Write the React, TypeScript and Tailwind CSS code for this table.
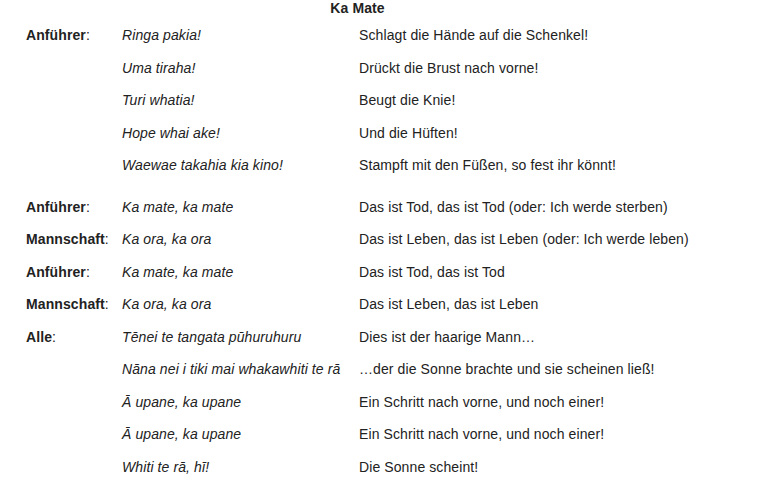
import React from "react";

type Row = { who?: string; mi: string; de: string };

const block1: Row[] = [
  { who: "Anführer", mi: "Ringa pakia!", de: "Schlagt die Hände auf die Schenkel!" },
  { mi: "Uma tiraha!", de: "Drückt die Brust nach vorne!" },
  { mi: "Turi whatia!", de: "Beugt die Knie!" },
  { mi: "Hope whai ake!", de: "Und die Hüften!" },
  { mi: "Waewae takahia kia kino!", de: "Stampft mit den Füßen, so fest ihr könnt!" },
];

const block2: Row[] = [
  { who: "Anführer", mi: "Ka mate, ka mate", de: "Das ist Tod, das ist Tod (oder: Ich werde sterben)" },
  { who: "Mannschaft", mi: "Ka ora, ka ora", de: "Das ist Leben, das ist Leben (oder: Ich werde leben)" },
  { who: "Anführer", mi: "Ka mate, ka mate", de: "Das ist Tod, das ist Tod" },
  { who: "Mannschaft", mi: "Ka ora, ka ora", de: "Das ist Leben, das ist Leben" },
  { who: "Alle", mi: "Tēnei te tangata pūhuruhuru", de: "Dies ist der haarige Mann…" },
  { mi: "Nāna nei i tiki mai whakawhiti te rā", de: "…der die Sonne brachte und sie scheinen ließ!" },
  { mi: "Ā upane, ka upane", de: "Ein Schritt nach vorne, und noch einer!" },
  { mi: "Ā upane, ka upane", de: "Ein Schritt nach vorne, und noch einer!" },
  { mi: "Whiti te rā, hī!", de: "Die Sonne scheint!" },
];

function Rows({ rows }: { rows: Row[] }) {
  return (
    <>
      {rows.map((r, i) => (
        <div key={i} className="grid grid-cols-[96px_237px_1fr] h-[32.5px] items-center whitespace-nowrap">
          <div>
            {r.who ? (
              <>
                <span className="font-bold">{r.who}</span>:
              </>
            ) : null}
          </div>
          <div className="italic">{r.mi}</div>
          <div>{r.de}</div>
        </div>
      ))}
    </>
  );
}

export default function App() {
  return (
    <div
      className="w-[762px] h-[499px] bg-white text-[#222222] text-[14px] leading-[16px] tracking-[0.1px] overflow-hidden"
      style={{ fontFamily: '"Liberation Sans", Arial, sans-serif' }}
    >
      <div className="w-[715px] h-[19px] text-center font-bold">Ka Mate</div>
      <div className="pl-[26px]">
        <Rows rows={block1} />
        <div className="h-[9px]" />
        <Rows rows={block2} />
      </div>
    </div>
  );
}
